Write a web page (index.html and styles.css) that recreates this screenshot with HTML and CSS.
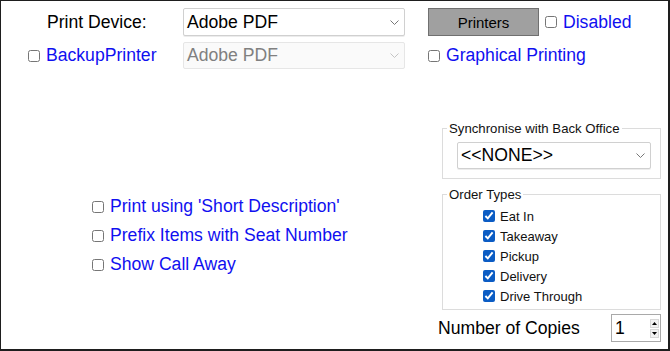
FILE: index.html
```html
<!DOCTYPE html>
<html>
<head>
<meta charset="utf-8">
<link rel="stylesheet" href="styles.css">
</head>
<body>
<div class="frame">
  <div class="top">
    <div class="cell device-label">Print Device:</div>
    <div class="select"><span class="select-text">Adobe PDF</span><svg class="chev" width="9" height="5" viewBox="0 0 9 5"><path d="M0.5 0.5 L4.5 4.5 L8.5 0.5" fill="none" stroke="#777" stroke-width="1"/></svg></div>
    <div class="spacer"></div>
    <div class="cell tools">
      <button class="btn">Printers</button>
      <label class="chk blue"><input type="checkbox">Disabled</label>
    </div>
    <div class="cell backup"><label class="chk blue"><input type="checkbox">BackupPrinter</label></div>
    <div class="select disabled"><span class="select-text">Adobe PDF</span><svg class="chev" width="9" height="5" viewBox="0 0 9 5"><path d="M0.5 0.5 L4.5 4.5 L8.5 0.5" fill="none" stroke="#c4c4c4" stroke-width="1"/></svg></div>
    <div class="spacer"></div>
    <div class="cell"><label class="chk blue"><input type="checkbox">Graphical Printing</label></div>
  </div>
  <div class="lower">
    <div class="options">
      <label class="chk blue row"><input type="checkbox">Print using 'Short Description'</label>
      <label class="chk blue row"><input type="checkbox">Prefix Items with Seat Number</label>
      <label class="chk blue row"><input type="checkbox">Show Call Away</label>
    </div>
    <div class="side">
      <fieldset class="group">
        <legend>Synchronise with Back Office</legend>
        <div class="group-body sync">
          <div class="select sync-select"><span class="select-text">&lt;&lt;NONE&gt;&gt;</span><svg class="chev" width="9" height="5" viewBox="0 0 9 5"><path d="M0.5 0.5 L4.5 4.5 L8.5 0.5" fill="none" stroke="#777" stroke-width="1"/></svg></div>
        </div>
      </fieldset>
      <fieldset class="group types">
        <legend>Order Types</legend>
        <div class="group-body types-body">
          <label class="chk small"><input type="checkbox" checked>Eat In</label>
          <label class="chk small"><input type="checkbox" checked>Takeaway</label>
          <label class="chk small"><input type="checkbox" checked>Pickup</label>
          <label class="chk small"><input type="checkbox" checked>Delivery</label>
          <label class="chk small"><input type="checkbox" checked>Drive Through</label>
        </div>
      </fieldset>
      <div class="copies">
        <span>Number of Copies</span>
        <div class="spin">
          <span class="spin-value">1</span>
          <div class="spin-btns">
            <div class="spin-btn"><svg width="5" height="3" viewBox="0 0 5 3"><path d="M0 3 L2.5 0 L5 3 Z" fill="#000"/></svg></div>
            <div class="spin-btn"><svg width="5" height="3" viewBox="0 0 5 3"><path d="M0 0 L2.5 3 L5 0 Z" fill="#000"/></svg></div>
          </div>
        </div>
      </div>
    </div>
  </div>
</div>
</body>
</html>
```

FILE: styles.css
```css
html, body {
  margin: 0;
  padding: 0;
  background: #fff;
}
body {
  font-family: "Liberation Sans", Arial, sans-serif;
  font-size: 17.6px;
  color: #000;
}
.frame {
  width: 670px;
  height: 351px;
  box-sizing: border-box;
  border: 1px solid #1e1e1e;
  border-right-width: 2px;
  border-bottom-width: 2px;
  overflow: hidden;
}
.top {
  display: grid;
  grid-template-columns: 182px 222px 23px 1fr;
  grid-template-rows: 28px 27px;
  row-gap: 6px;
  padding-top: 7px;
}
.cell {
  display: flex;
  align-items: center;
}
.device-label {
  padding-left: 46px;
}
.backup {
  padding-left: 27px;
}
.select {
  display: flex;
  align-items: center;
  justify-content: space-between;
  box-sizing: border-box;
  border: 1px solid #d0d0d0;
  border-radius: 2px;
  background: #fff;
  padding: 0 5px 0 3px;
  box-shadow: 0 1px 0 #ececec;
}
.select.disabled {
  border-color: #e6e6e6;
  background: #fafafa;
  color: #808080;
  box-shadow: none;
}
.chev {
  display: block;
}
.tools {
  gap: 6px;
}
.btn {
  width: 111px;
  height: 28px;
  box-sizing: border-box;
  background: #a0a0a0;
  border: 1px solid #707070;
  border-radius: 0;
  font-family: "Liberation Sans", Arial, sans-serif;
  font-size: 15px;
  color: #000;
  padding: 0;
  margin: 0;
}
.chk {
  display: flex;
  align-items: center;
}
.chk input {
  width: 12px;
  height: 12px;
  margin: 0 6px 0 0;
}
.blue {
  color: #1010f0;
}
.lower {
  display: flex;
}
.options {
  width: 437px;
  box-sizing: border-box;
  padding: 123px 0 0 91px;
  display: flex;
  flex-direction: column;
}
.row {
  height: 29px;
}
.side {
  width: 223px;
  padding-top: 52px;
  display: flex;
  flex-direction: column;
}
.group {
  margin: 0 0 0 4px;
  padding: 0;
  border: 1px solid #dcdcdc;
  min-width: 0;
}
.group legend {
  font-size: 13.2px;
  line-height: 15px;
  padding: 0 2px;
  margin-left: 4px;
  color: #111;
}
.sync {
  padding: 6px 9px 9px 14px;
}
.sync-select {
  height: 27px;
}
.types {
  margin-top: 8px;
}
.types-body {
  padding: 4px 0 3px 40px;
  display: flex;
  flex-direction: column;
}
.small {
  height: 20px;
  font-size: 13px;
  color: #111;
}
.small input {
  margin-right: 5px;
  accent-color: #0b5cc4;
}
.copies {
  margin-top: 4px;
  height: 28px;
  display: flex;
  align-items: center;
  justify-content: space-between;
}
.spin {
  width: 50px;
  height: 28px;
  box-sizing: border-box;
  border: 1px solid #a9a9a9;
  display: flex;
  align-items: center;
  justify-content: space-between;
  background: #fff;
}
.spin-value {
  padding-left: 3px;
}
.spin-btns {
  display: flex;
  flex-direction: column;
  gap: 1px;
  padding-right: 1px;
}
.spin-btn {
  width: 9px;
  height: 9px;
  box-sizing: border-box;
  border: 1px solid #d8d8d8;
  background: #f2f2f2;
  display: flex;
  align-items: center;
  justify-content: center;
}
.spin-btn svg {
  display: block;
}
```
